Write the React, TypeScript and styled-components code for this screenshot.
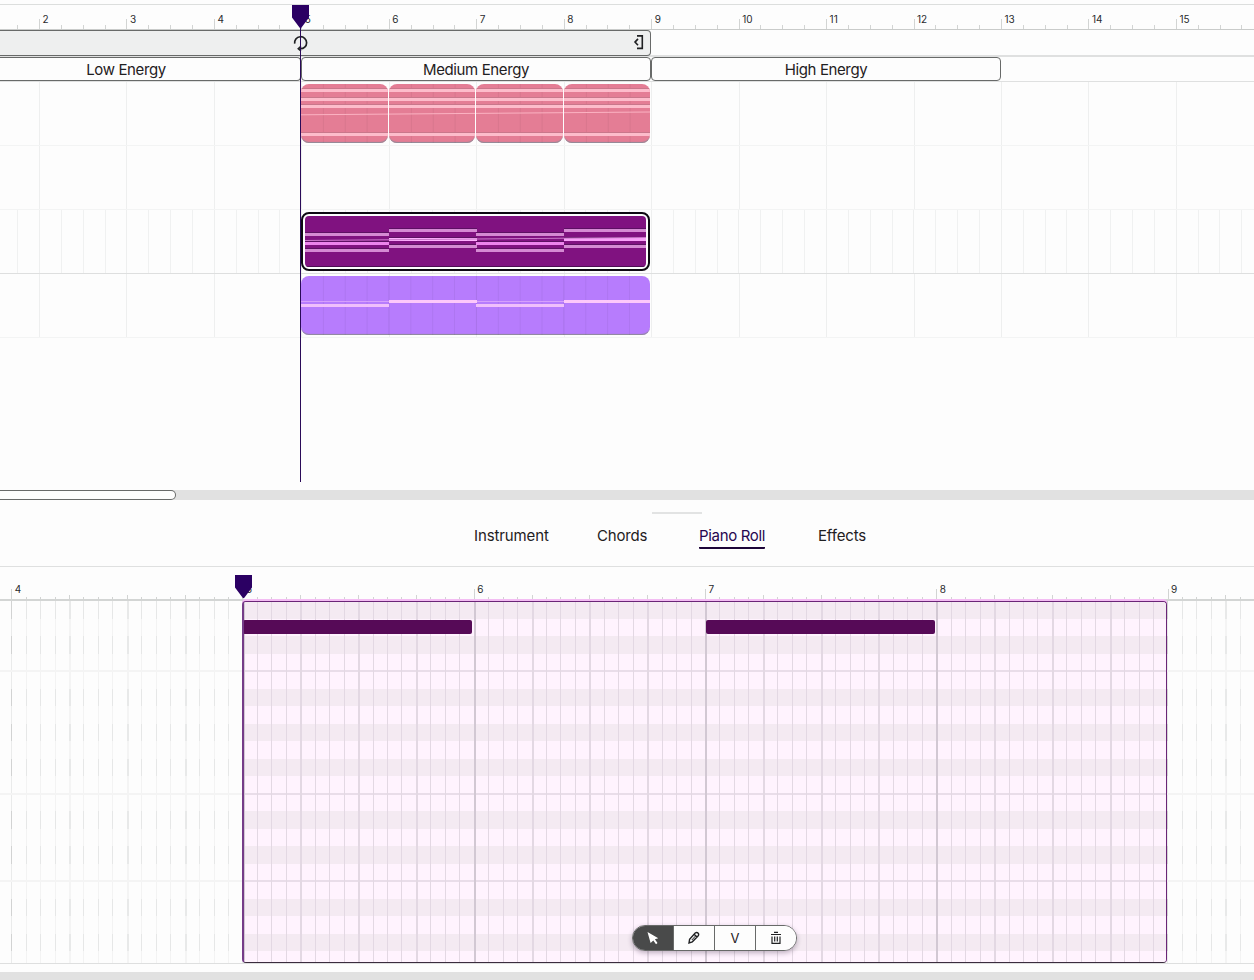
import React from 'react';
import styled, { createGlobalStyle, css } from 'styled-components';

const BAR = 87.46;
const STEP = 14.455;
const KEY = 17.5;

const Global = createGlobalStyle`
  * { box-sizing: border-box; }
  body { margin: 0; background: #fdfdfd; color: #1f2022; font-family: Inter, "Liberation Sans", sans-serif; }
`;

const Page = styled.div`
  width: 1254px; height: 980px; overflow: hidden; display: flex; flex-direction: column;
  padding-top: 4px;
`;

const Arranger = styled.section`
  display: grid; height: 486px; flex: none;
  > * { grid-area: 1 / 1; min-width: 0; }
`;
const ArrangerRows = styled.div`display: flex; flex-direction: column; width: 1254px; overflow: hidden;`;

const Ruler = styled.div`
  height: 26px; flex: none; border-top: 1px solid #dcdedd; border-bottom: 1px solid #c9cbca;
  display: flex; align-items: flex-end; padding-left: 39px; margin-left: -87.46px; width: 1400px;
`;
const RulerBar = styled.div<{ $w: number }>`
  display: flex; align-items: flex-end; flex: none; width: ${p => p.$w}px; height: 100%;
`;
const Tick = styled.span<{ $h: number }>`
  flex: 1 0 0; min-width: 0; height: ${p => p.$h}px; border-left: 1px solid #d2d4d3;
`;
const FirstTick = styled(Tick)`
  font-size: 10px; line-height: 10px; color: #2a2b2d; white-space: nowrap;
`;
const BarNumber = styled.span`display: block; margin: -5px 0 0 2.5px;`;

const LoopRow = styled.div`height: 27px; flex: none; border-bottom: 2px solid #dfe0e0; display: flex;`;
const LoopRegion = styled.div`
  width: 651px; height: 26px; background: #eeefef; border: 1px solid #686a69; border-left: 0;
  border-radius: 0 4px 4px 0; display: flex; align-items: center; justify-content: space-between;
  padding: 0 5px 0 292px; flex: none;
`;
const SectionRow = styled.div`height: 25px; flex: none; display: flex; border-bottom: 1px solid #dfe0e0;`;
const Section = styled.div<{ $w: number; $first?: boolean }>`
  width: ${p => p.$w}px; height: 24px; flex: none; border: 1px solid #686a69; border-radius: 4px; background: #fdfdfd;
  display: flex; align-items: center; justify-content: center; font-size: 15px; letter-spacing: -0.38px;
  ${p => p.$first && css`border-left: 0; border-radius: 0 4px 4px 0; padding-right: 48px;`}
`;

const Lane = styled.div<{ $strong?: boolean }>`
  height: 64px; flex: none; display: grid; border-bottom: 1px solid ${p => (p.$strong ? '#dedfdf' : '#f3f4f4')};
  > * { grid-area: 1 / 1; }
`;
const GridLines = styled.div`display: flex; padding-left: 39px; margin-left: -87.46px; width: 1400px; overflow: hidden;`;
const GridCell = styled.div<{ $w: number; $bar?: boolean }>`
  flex: none; width: ${p => p.$w}px; border-left: 1px solid ${p => (p.$bar ? '#eeefef' : '#f0f1f1')};
`;
const Clips = styled.div`display: flex; gap: 1px; padding: 2px 0 0 301px; height: 62px; z-index: 1;`;
const Clip = styled.div<{ $w: number; $bg: string; $selected?: boolean }>`
  width: ${p => p.$w}px; height: 59px; flex: none; border-radius: 8px; overflow: hidden; background: ${p => p.$bg};
  box-shadow: inset 0 -2px 1px -1px #8e8b98;
  ${p => p.$selected && css`border: 2px solid #0e0912; padding: 2px; background: #fdfdfd; box-shadow: none;`}
  svg { display: block; border-radius: ${p => (p.$selected ? 4 : 0)}px; }
`;

const PlayheadLayer = styled.div<{ $top: number; $left: number }>`
  z-index: 3; padding: ${p => p.$top}px 0 0 ${p => p.$left}px; pointer-events: none;
  svg { display: block; }
`;

const ScrollTrack = styled.div`height: 10px; flex: none; background: #e1e1e1;`;
const ScrollThumb = styled.div`
  width: 176px; height: 10px; background: #fdfdfd; border: 1px solid #686a69; border-left: 0; border-radius: 0 5px 5px 0;
`;

const Panel = styled.section`height: 67px; flex: none; border-bottom: 1px solid #dfe0e0; display: flex; flex-direction: column;`;
const Handle = styled.div`width: 50px; height: 2px; background: #e2e3e3; margin: 12px 0 0 652px;`;
const Tabs = styled.nav`display: flex; padding-left: 474px; margin-top: 12px;`;
const Tab = styled.div<{ $w: number; $ls: number; $active?: boolean }>`
  width: ${p => p.$w}px; letter-spacing: ${p => p.$ls}px; flex: none; font-size: 15px; line-height: 20px; height: 23px; white-space: nowrap;
  span { display: inline-block; height: 23px; }
  ${p => p.$active && css`color: #26064f; span { border-bottom: 2px solid #1c0438; border-radius: 1px; }`}
`;

const Editor = styled.section`
  display: grid; height: 397px; flex: none;
  > * { grid-area: 1 / 1; min-width: 0; }
`;
const EditorRows = styled.div`display: flex; flex-direction: column; width: 1254px; overflow: hidden;`;
const RollRuler = styled.div`
  height: 34px; flex: none; border-bottom: 2px solid #d3d5d4; display: flex; align-items: flex-end;
  margin-left: -46.6px; width: 1420px;
`;
const Roll = styled.div`height: 363px; flex: none; display: grid; border-bottom: 1px solid #dedfdf; > * { grid-area: 1 / 1; min-width: 0; min-height: 0; }`;
const Keys = styled.div`display: flex; flex-direction: column; overflow: hidden; height: 362px;`;
const KeyRow = styled.div<{ $dark?: boolean; $above?: boolean; $below?: boolean }>`
  height: ${KEY}px; flex: none; display: flex; margin-left: -46.6px; width: 1420px;
  border-top: ${p => (p.$above ? '1px solid #e8e9e9' : '0')};
  border-bottom: ${p => (p.$below ? '1px solid #e8e9e9' : '0')};
  opacity: ${p => (p.$dark ? 1 : 0.42)};
`;
const StepCell = styled.div<{ $kind: 0 | 1 | 2 }>`
  width: ${STEP}px; flex: none; border-left: ${p => (p.$kind === 1 ? 2 : 1)}px solid ${p => ['#e6e7e7', '#e8e9e9', '#d2d3d3'][p.$kind]};
`;
const Region = styled.div`
  width: 925px; height: 362px; margin-left: 242px; border: 1px solid #6b2577; border-bottom-color: #3b2c3e;
  border-left: 2px solid #753c88; border-radius: 4px; box-shadow: 0 -2px 0 #f3bdf3;
  background: #fff3fe; overflow: hidden; display: grid; z-index: 1;
  > * { grid-area: 1 / 1; min-width: 0; min-height: 0; }
`;
const RegionRows = styled.div`display: flex; flex-direction: column; overflow: hidden; height: 361px; margin-top: -1px;`;
const RegionRow = styled.div<{ $dark?: boolean; $above?: boolean; $below?: boolean }>`
  height: ${KEY}px; flex: none; background: ${p => (p.$dark ? '#f4eaf2' : '#fff3fe')};
  border-top: ${p => (p.$above ? '1px solid #e9dde9' : '0')};
  border-bottom: ${p => (p.$below ? '1px solid #e9dde9' : '0')};
`;
const RegionSteps = styled.div`display: flex; overflow: hidden; margin-left: -1.5px;`;
const RegionStep = styled.div<{ $kind: 0 | 1 | 2 }>`
  width: ${STEP}px; flex: none; border-left: ${p => (p.$kind ? 2 : 1)}px solid ${p => ['#e3d8e3', '#e3d8e3', '#d2c8d3'][p.$kind]};
`;
const Notes = styled.div`display: flex; gap: 234px; padding-top: 18px; margin-left: -1px;`;
const Note = styled.div`width: 229px; height: 14px; background: #560a57; border-radius: 2px;`;

const ToolLayer = styled.div`z-index: 4; display: flex; align-items: flex-end; padding: 0 0 13px 632px;`;
const Toolbar = styled.div`
  display: flex; width: 165px; height: 26px; border: 1px solid #686a69; border-radius: 13px; overflow: hidden; background: #fdfdfd;
  box-shadow: 0 2px 5px rgba(40, 20, 50, 0.3);
`;
const Tool = styled.button<{ $active?: boolean }>`
  width: 41px; flex: none; border: 0; border-left: 1px solid #686a69; padding: 0; background: ${p => (p.$active ? '#494a4a' : '#fdfdfd')};
  display: flex; align-items: center; justify-content: center; font: 13px Inter, sans-serif; color: #1f2022;
  &:first-child { border-left: 0; width: 40px; }
`;
const Footer = styled.div`height: 8px; flex: none; margin-top: 8px; background: #e1e1e1;`;

const Marker = ({ height }: { height: number }) => (
  <svg width="18" height={height} viewBox={`0 0 18 ${height}`}>
    {height > 30 && <path d="M8.5 20V999" stroke="#2a0a58" />}
    <path d="M0 0H17V12.5L9.5 22.5Q8.5 24 7.5 22.5L0 12.5Z" fill="#2b0063" />
  </svg>
);

const quarterLines = (w: number) =>
  Array.from({ length: 16 }, (_, i) => <path key={i} d={`M${i * 21.865 + 0.5} 0V59`} stroke="#000" strokeOpacity={i % 4 ? 0.05 : 0.08} />).slice(1, Math.ceil(w / 21.865));

const DrumClip = ({ w, index }: { w: number; index: number }) => (
  <Clip $w={w} $bg="#e47d95">
    <svg width={w} height="59">
      {quarterLines(w)}
      {[5, 14, 21, 49].map(y => (
        <g key={y}>
          <rect y={y - 1} width={w} height="1" fill="#c9778b" />
          <rect y={y} width={w} height="3" fill="#fdbccb" />
        </g>
      ))}
      <path d={`M0 ${30.8 - index * 0.7}L${w} ${30.1 - index * 0.7}`} stroke="#fbb2c2" />
    </svg>
  </Clip>
);

const Bands = ({ x, w, ys, fill }: { x: number; w: number; ys: number[]; fill: string }) => (
  <>
    {ys.map(y => (
      <g key={y}>
        <rect x={x} y={y - 1} width={w} height="1" fill="#5d1163" />
        <rect x={x} y={y} width={w} height="3" fill={fill} />
      </g>
    ))}
  </>
);

const LaneGrid = ({ fine }: { fine?: boolean }) => (
  <GridLines>
    {Array.from({ length: fine ? 60 : 15 }, (_, i) => (
      <GridCell key={i} $w={fine ? BAR / 4 : BAR} $bar={!fine || i % 4 === 0} />
    ))}
  </GridLines>
);

const stepKind = (i: number): 0 | 1 | 2 => (i % 16 === 0 ? 2 : i % 4 === 0 ? 1 : 0);
const darkRows = new Set([0, 2, 5, 7, 9, 12, 14, 17, 19]);
const lineRows = new Set([4, 11, 16]);
const rows = Array.from({ length: 21 }, (_, i) => i);

export default function App() {
  return (
    <>
      <Global />
      <Page>
        <Arranger>
          <ArrangerRows>
            <Ruler>
              {Array.from({ length: 15 }, (_, b) => (
                <RulerBar key={b} $w={BAR}>
                  <FirstTick $h={10}>{b > 0 && <BarNumber>{b + 1}</BarNumber>}</FirstTick>
                  <Tick $h={4} /><Tick $h={4} /><Tick $h={4} />
                </RulerBar>
              ))}
            </Ruler>
            <LoopRow>
              <LoopRegion>
                <svg width="17" height="18" viewBox="0 0 17 18" fill="none" stroke="#1f2022" strokeWidth="1.7">
                  <path d="M2.7 9.7A6 6 0 1 1 8.2 14.7M8.9 12.4L6.4 14.7L8.9 16.8" />
                </svg>
                <svg width="12" height="16" viewBox="0 0 12 16" fill="none" stroke="#1f2022" strokeWidth="1.6">
                  <path d="M4 0.9H9.3V13.4H4M5 3.9L2 7.1L5 10.3" />
                </svg>
              </LoopRegion>
            </LoopRow>
            <SectionRow>
              <Section $w={301} $first>Low Energy</Section>
              <Section $w={350}>Medium Energy</Section>
              <Section $w={350}>High Energy</Section>
            </SectionRow>
            <Lane>
              <LaneGrid />
              <Clips>
                {[87, 86, 87, 86].map((w, i) => <DrumClip key={i} w={w} index={i} />)}
              </Clips>
            </Lane>
            <Lane><LaneGrid /></Lane>
            <Lane $strong>
              <LaneGrid fine />
              <Clips>
                <Clip $w={349} $bg="#801280" $selected>
                  <svg width="341" height="51">
                    <rect width="341" height="51" fill="#801280" />
                    <Bands x={0} w={84} ys={[17, 33]} fill="#d58ad3" />
                    <Bands x={0} w={84} ys={[26]} fill="#ec84ec" />
                    <Bands x={84} w={88} ys={[13, 29]} fill="#d58ad3" />
                    <Bands x={84} w={88} ys={[22]} fill="#ffb0ff" />
                    <Bands x={171} w={88} ys={[17, 33]} fill="#d58ad3" />
                    <Bands x={171} w={88} ys={[26]} fill="#ec84ec" />
                    <Bands x={259} w={82} ys={[13, 29]} fill="#d58ad3" />
                    <Bands x={259} w={82} ys={[22]} fill="#f8a0f8" />
                    <path d="M0 24.5L341 21.5" stroke="#c979c9" />
                    <path d="M0 50.5H341" stroke="#4c0d52" />
                  </svg>
                </Clip>
              </Clips>
            </Lane>
            <Lane>
              <LaneGrid />
              <Clips>
                <Clip $w={349} $bg="#b77cfd">
                  <svg width="349" height="59">
                    {quarterLines(349)}
                    <path d="M0 25.5H88M175 25.5H263" stroke="#d6a0fc" />
                    <path d="M0 29.5H88M175 29.5H263" stroke="#f0bffc" strokeWidth="3" />
                    <path d="M88 25.5H176M263 25.5H349" stroke="#fdc8fb" strokeWidth="3" />
                  </svg>
                </Clip>
              </Clips>
            </Lane>
          </ArrangerRows>
          <PlayheadLayer $top={1} $left={292}><Marker height={477} /></PlayheadLayer>
        </Arranger>

        <ScrollTrack><ScrollThumb /></ScrollTrack>

        <Panel>
          <Handle />
          <Tabs>
            <Tab $w={123} $ls={-0.12}><span>Instrument</span></Tab>
            <Tab $w={102} $ls={-0.2}><span>Chords</span></Tab>
            <Tab $w={119} $ls={-0.33} $active><span>Piano Roll</span></Tab>
            <Tab $w={60} $ls={-0.15}><span>Effects</span></Tab>
          </Tabs>
        </Panel>

        <Editor>
          <EditorRows>
            <RollRuler>
              {Array.from({ length: 4 }, (_, i) => <RulerBar key={i} $w={STEP}><Tick $h={i ? 2 : 4} /></RulerBar>)}
              {Array.from({ length: 6 }, (_, b) => (
                <RulerBar key={b} $w={STEP * 16}>
                  <FirstTick $h={10}><BarNumber>{b + 4}</BarNumber></FirstTick>
                  {Array.from({ length: 15 }, (_, i) => <Tick key={i} $h={(i + 1) % 4 ? 2 : 4} />)}
                </RulerBar>
              ))}
            </RollRuler>
            <Roll>
              <Keys>
                {rows.map(r => (
                  <KeyRow key={r} $dark={darkRows.has(r)} $above={lineRows.has(r)} $below={lineRows.has(r + 1)}>
                    {Array.from({ length: 96 }, (_, i) => <StepCell key={i} $kind={stepKind(i + 12)} />)}
                  </KeyRow>
                ))}
              </Keys>
              <Region>
                <RegionRows>
                  {rows.map(r => <RegionRow key={r} $dark={darkRows.has(r)} $above={lineRows.has(r)} $below={lineRows.has(r + 1)} />)}
                </RegionRows>
                <RegionSteps>
                  {Array.from({ length: 65 }, (_, i) => <RegionStep key={i} $kind={stepKind(i)} />)}
                </RegionSteps>
                <Notes><Note /><Note /></Notes>
              </Region>
            </Roll>
          </EditorRows>
          <PlayheadLayer $top={8} $left={234.6}><Marker height={24} /></PlayheadLayer>
          <ToolLayer>
            <Toolbar>
              <Tool $active>
                <svg width="14" height="14" viewBox="0 0 14 14"><path d="M1.5 1L12.3 7.2L8.9 8.3L11.5 12L10 13.2L7.3 9.5L4.6 12Z" fill="#fff" /></svg>
              </Tool>
              <Tool>
                <svg width="14" height="14" viewBox="0 0 14 14" fill="none" stroke="#1f2022" strokeWidth="1.4">
                  <path d="M2 12L2.6 8.2L8.2 2Q9.8 .8 11.2 2.2Q12.2 3.6 11 5L5.3 10.8ZM7.2 3.2L10 6" /><path d="M8.5 5L4.8 9" strokeWidth="1" />
                </svg>
              </Tool>
              <Tool>V</Tool>
              <Tool>
                <svg width="12" height="14" viewBox="0 0 12 14" fill="none" stroke="#1f2022" strokeWidth="1.2">
                  <path d="M1 3.5H11M4 1.4H8M2 5.5V12.4H10V5.5" /><path d="M4.7 5.5V10.5M7.3 5.5V10.5" />
                </svg>
              </Tool>
            </Toolbar>
          </ToolLayer>
        </Editor>
        <Footer />
      </Page>
    </>
  );
}
